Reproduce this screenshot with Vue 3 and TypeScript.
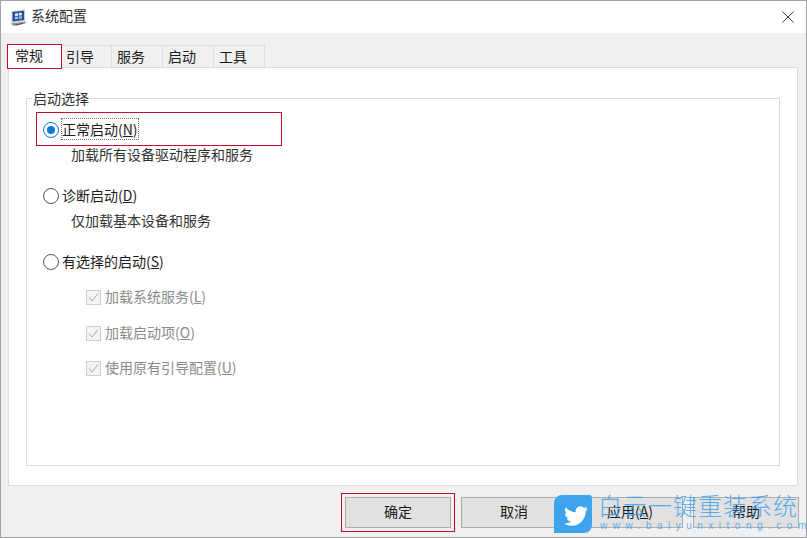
<script setup lang="ts">
const tabs: string[] = ['常规', '引导', '服务', '启动', '工具']
const buttons: { label: string; key?: string; tail?: string }[] = [
  { label: '确定' },
  { label: '取消' },
  { label: '应用(', key: 'A', tail: ')' },
  { label: '帮助' },
]
const checks: { label: string; key: string }[] = [
  { label: '加载系统服务', key: 'L' },
  { label: '加载启动项', key: 'O' },
  { label: '使用原有引导配置', key: 'U' },
]
</script>

<template>
  <div class="window">
    <header class="titlebar">
      <svg class="app-icon" width="18" height="18" viewBox="0 0 18 18">
        <path d="M2.500 2 16 .5v11.500L2.500 14z" fill="#c9ced6" />
        <path d="M3.500 3 15 1.700v9.300L3.500 12.600z" fill="#27509c" />
        <path d="M6 4.600 9 4.200v2.600l-3 .4zM9.800 4.100l3-.4v2.600l-3 .4z" fill="#dbe8f7" />
        <path d="M6 8l3-.4v2.400l-3 .4zM9.800 7.500l3-.4v2.400l-3 .4z" fill="#9dbde6" />
        <path d="M1.500 14.500 16 12.500 17.500 14 5 17z" fill="#8d9095" />
        <path d="M6 15.500 14 13.900 14.500 14.700 7.500 16.400z" fill="#55585c" />
      </svg>
      <span class="title">系统配置</span>
      <svg class="close" width="12" height="12" viewBox="0 0 12 12">
        <path d="M.5.500 11.500 11.500M11.500.500.500 11.500" stroke="#3c3c3c" stroke-width="1" fill="none" />
      </svg>
    </header>

    <main class="body">
      <nav class="tabs">
        <div v-for="(t, i) in tabs" :key="t" class="tab" :class="{ active: i === 0 }">{{ t }}</div>
      </nav>

      <section class="panel">
        <div class="group">
          <span class="legend">启动选择</span>

          <label class="row radio-row first">
            <span class="radio on"><i /></span>
            <span class="focus">正常启动(<u>N</u>)</span>
          </label>
          <p class="desc">加载所有设备驱动程序和服务</p>

          <label class="row radio-row">
            <span class="radio" />
            <span>诊断启动(<u>D</u>)</span>
          </label>
          <p class="desc">仅加载基本设备和服务</p>

          <label class="row radio-row">
            <span class="radio" />
            <span>有选择的启动(<u>S</u>)</span>
          </label>

          <label v-for="c in checks" :key="c.key" class="row check-row">
            <svg class="check" width="15" height="15" viewBox="0 0 15 15">
              <rect x=".5" y=".5" width="14" height="14" fill="#f4f4f4" stroke="#cfcfcf" />
              <path d="M3 7.500 6 11 12 3.500" fill="none" stroke="#a6a6a6" stroke-width="1" />
            </svg>
            <span>{{ c.label }}(<u>{{ c.key }}</u>)</span>
          </label>
        </div>
      </section>

      <footer class="actions">
        <button v-for="b in buttons" :key="b.label" class="btn" type="button">
          {{ b.label }}<u v-if="b.key">{{ b.key }}</u>{{ b.tail }}
        </button>
      </footer>
    </main>

    <div class="mark mark-tab" />
    <div class="mark mark-radio" />
    <div class="mark mark-ok" />

    <div class="watermark">
      <div class="wm-logo">
        <svg width="24" height="24" viewBox="0 0 24 24">
          <path
            fill="#fff"
            d="M23.953 4.570a10 10 0 01-2.825.775 4.958 4.958 0 002.163-2.723c-.951.555-2.005.959-3.127 1.184a4.920 4.920 0 00-8.384 4.482C7.690 8.095 4.067 6.130 1.640 3.162a4.822 4.822 0 00-.666 2.475c0 1.710.870 3.213 2.188 4.096a4.904 4.904 0 01-2.228-.616v.060a4.923 4.923 0 003.946 4.827 4.996 4.996 0 01-2.212.085 4.936 4.936 0 004.604 3.417 9.867 9.867 0 01-6.102 2.105c-.390 0-.779-.023-1.170-.067a13.995 13.995 0 007.557 2.209c9.053 0 13.998-7.496 13.998-13.985 0-.210 0-.420-.015-.630A9.935 9.935 0 0024 4.590z"
          />
        </svg>
      </div>
      <div class="wm-text">
        <div class="wm-cn">白云一键重装系统</div>
        <div class="wm-en">www.baiyunxitong.com</div>
      </div>
    </div>
  </div>
</template>

<style>
html, body { margin: 0; padding: 0; background: #f0f0f0; }
</style>

<style scoped>
.window {
  position: relative;
  width: 807px;
  height: 538px;
  box-sizing: border-box;
  border: 1px solid #a3a3a3;
  overflow: hidden;
  display: flex;
  flex-direction: column;
  background: #f0f0f0;
  color: #1c1c1c;
  font-family: "Noto Sans CJK SC", "Noto Sans", sans-serif;
  font-size: 14px;
  line-height: 20px;
}
.titlebar {
  height: 32px;
  flex: none;
  background: #fff;
  display: flex;
  align-items: center;
  padding: 0 12px 0 8px;
}
.app-icon { flex: none; margin-top: 1px; }
.title { margin: 0 0 4px 4px; color: #333; }
.close { margin-left: auto; }
.body {
  flex: 1;
  min-height: 0;
  display: flex;
  flex-direction: column;
  padding: 12px 7px 8px 7px;
}
.tabs {
  display: flex;
  height: 22px;
  flex: none;
  position: relative;
  z-index: 1;
}
.tab {
  box-sizing: border-box;
  width: 51px;
  height: 22px;
  background: #f0f0f0;
  border: 1px solid #dcdcdc;
  border-left: none;
  border-bottom: none;
  text-align: center;
  padding-right: 12px;
  line-height: 20px;
}
.tab.active {
  width: 53px;
  height: 23px;
  background: #fff;
  border: none;
  padding-right: 11px;
}
.panel {
  box-sizing: border-box;
  height: 419px;
  flex: none;
  width: 790px;
  background: #fff;
  border: 1px solid #dcdcdc;
  padding: 30px 17px 0 17px;
}
.group {
  position: relative;
  box-sizing: border-box;
  height: 368px;
  border: 1px solid #dcdcdc;
  padding: 0 16px;
}
.legend {
  position: absolute;
  left: 5px;
  top: -11px;
  padding: 0 1px;
  background: #fff;
  color: #333;
}
.row {
  display: flex;
  align-items: center;
  height: 20px;
}
.row > span:last-child { margin-bottom: 2px; }
.radio-row { gap: 3px; margin-top: 22px; }
.radio-row.first { margin-top: 21px; }
.radio {
  box-sizing: border-box;
  width: 16px;
  height: 16px;
  flex: none;
  border: 1px solid #555;
  border-radius: 50%;
  display: flex;
  align-items: center;
  justify-content: center;
  background: #fff;
}
.radio.on { border-color: #0f78d4; }
.radio i {
  width: 8px;
  height: 8px;
  border-radius: 50%;
  background: #0f78d4;
}
.focus { outline: 1px dotted #777; outline-offset: 0; }
.desc {
  margin: 4px 0 0 28px;
  height: 20px;
  color: #333;
}
.check-row {
  gap: 4px;
  margin: 15px 0 0 43px;
  color: #8b8b8b;
}
.check-row:nth-of-type(5) { margin-top: 16px; }
.check { flex: none; }
.actions {
  display: flex;
  justify-content: flex-end;
  gap: 10px;
  margin-top: 11px;
}
.btn {
  box-sizing: border-box;
  width: 106px;
  height: 31px;
  padding: 0 0 4px;
  border: 1px solid #adadad;
  background: #e1e1e1;
  color: #1c1c1c;
  font: inherit;
}
.mark {
  position: absolute;
  z-index: 2;
  box-sizing: border-box;
  border: 1px solid #c00f2d;
  pointer-events: none;
}
.mark-tab { left: 6px; top: 43px; width: 55px; height: 25px; }
.mark-radio { left: 35px; top: 111px; width: 246px; height: 34px; }
.mark-ok { left: 340px; top: 492px; width: 114px; height: 39px; }
.watermark {
  position: absolute;
  z-index: 3;
  left: 553px;
  top: 494px;
  display: flex;
  pointer-events: none;
}
.wm-logo {
  box-sizing: border-box;
  width: 38px;
  height: 38px;
  padding: 3px 0 0 5px;
  background: #3fa4f0;
  border-radius: 8px 3px 8px 0;
  display: flex;
  align-items: center;
  justify-content: center;
}
.wm-text { margin: -4px 0 0 6px; width: 206px; }
.wm-cn {
  font-size: 24px;
  line-height: 28px;
  letter-spacing: 1px;
  font-weight: 300;
  color: rgba(50, 155, 240, 0.78);
  white-space: nowrap;
}
.wm-en {
  font-family: "Liberation Sans", sans-serif;
  font-size: 10px;
  line-height: 12px;
  letter-spacing: 5.500px;
  margin: 1px 0 0 2px;
  color: rgba(50, 155, 240, 0.78);
  white-space: nowrap;
}
</style>
